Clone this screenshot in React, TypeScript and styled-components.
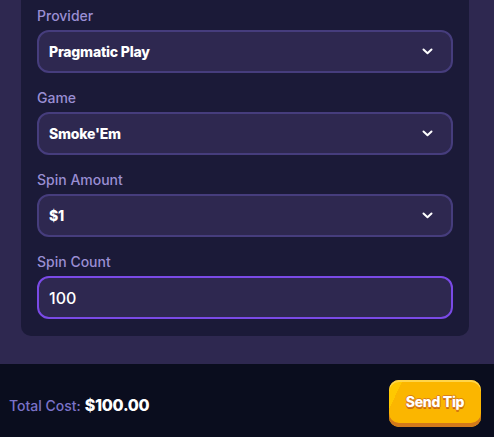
import React from "react";
import styled, { createGlobalStyle } from "styled-components";

const GlobalStyle = createGlobalStyle`
  html, body {
    margin: 0;
    padding: 0;
    background: #2e2850;
    font-family: Inter, "Noto Sans", sans-serif;
  }
`;

const Page = styled.div`
  width: 494px;
  height: 437px;
  display: flex;
  flex-direction: column;
  overflow: hidden;
  background: #2e2850;
`;

const Body = styled.div`
  flex: 1;
  display: flex;
  padding: 0 25px 28px 21px;
`;

const Card = styled.div`
  width: 100%;
  background: #1b1a38;
  border-radius: 0 0 10px 10px;
  padding: 0 16px 17px;
  display: flex;
  flex-direction: column;
  justify-content: flex-end;
  gap: 16px;
  box-sizing: border-box;
`;

const Field = styled.div`
  display: flex;
  flex-direction: column;
  gap: 6px;
`;

const Label = styled.div`
  color: #9a8ed3;
  font-size: 14px;
  line-height: 17px;
  font-weight: 500;
`;

const Box = styled.div<{ $focused?: boolean }>`
  height: 43px;
  box-sizing: border-box;
  border: 2px solid ${(p) => (p.$focused ? "#7a4ae6" : "#463d7d")};
  background: #2e2850;
  border-radius: 12px;
  padding: 0 18px 0 10px;
  display: flex;
  align-items: center;
  justify-content: space-between;
  color: #fff;
`;

const Value = styled.span`
  font-size: 14px;
  font-weight: 800;
  letter-spacing: -0.2px;
`;

const InputValue = styled.span`
  font-size: 16px;
  font-weight: 500;
`;

const Footer = styled.div`
  height: 73px;
  background: #0a0d1e;
  display: flex;
  align-items: center;
  justify-content: space-between;
  padding: 0 13px 0 9px;
`;

const Total = styled.div`
  display: flex;
  align-items: baseline;
  gap: 4px;
  margin-top: 8px;
`;

const TotalLabel = styled.span`
  color: #7a72c8;
  font-size: 14px;
  font-weight: 500;
`;

const TotalValue = styled.span`
  color: #fff;
  font-size: 16px;
  font-weight: 800;
  letter-spacing: -0.3px;
`;

const TipButton = styled.button`
  width: 92px;
  height: 47px;
  margin-top: 6px;
  border: none;
  border-radius: 10px;
  background: linear-gradient(115deg, #ffc800 0 12%, #fbb600 12%);
  box-shadow: inset 0 -4px 0 #d2791a, inset 0 2px 0 #ffd54a;
  color: #fff;
  font-family: Inter, "Noto Sans", sans-serif;
  font-size: 14px;
  font-weight: 800;
  letter-spacing: -0.3px;
  padding: 0 0 4px;
  text-shadow:
    1px 0 0 #d9801c, -1px 0 0 #d9801c, 0 1px 0 #d9801c, 0 -1px 0 #d9801c,
    0 1.5px 0 #c96a12;
`;

const Chevron = () => (
  <svg width="11" height="7" viewBox="0 0 11 7" fill="none">
    <path d="M1.5 1.5 L5.5 5.2 L9.5 1.5" stroke="#fff" strokeWidth="2" strokeLinecap="round" strokeLinejoin="round" />
  </svg>
);

const selects = [
  { label: "Provider", value: "Pragmatic Play" },
  { label: "Game", value: "Smoke'Em" },
  { label: "Spin Amount", value: "$1" },
];

export default function App() {
  return (
    <Page>
      <GlobalStyle />
      <Body>
        <Card>
          {selects.map((s) => (
            <Field key={s.label}>
              <Label>{s.label}</Label>
              <Box>
                <Value>{s.value}</Value>
                <Chevron />
              </Box>
            </Field>
          ))}
          <Field>
            <Label>Spin Count</Label>
            <Box $focused>
              <InputValue>100</InputValue>
            </Box>
          </Field>
        </Card>
      </Body>
      <Footer>
        <Total>
          <TotalLabel>Total Cost:</TotalLabel>
          <TotalValue>$100.00</TotalValue>
        </Total>
        <TipButton>Send Tip</TipButton>
      </Footer>
    </Page>
  );
}
